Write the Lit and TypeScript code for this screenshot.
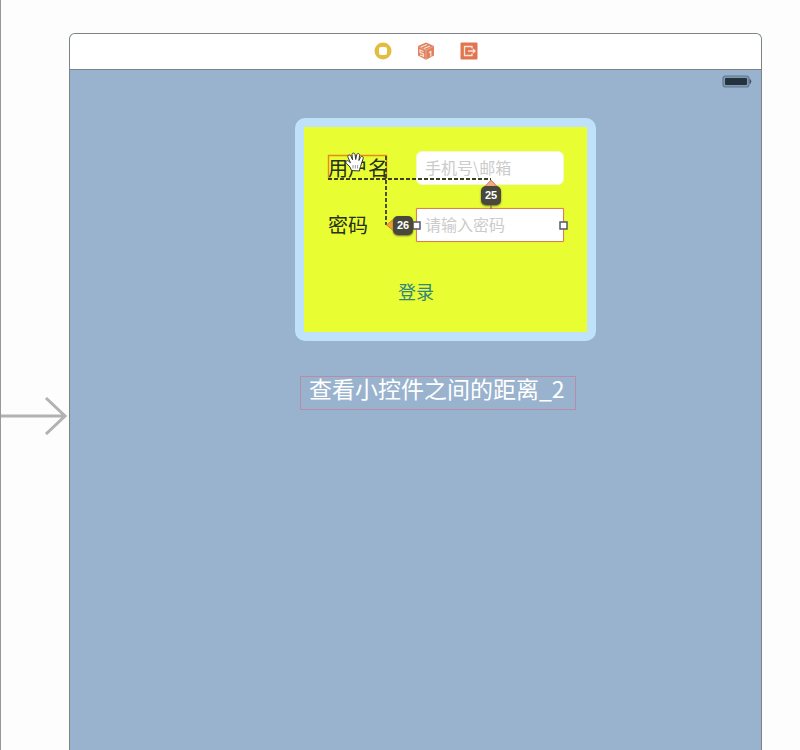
import { LitElement, html, css, svg } from "lit";
import { customElement } from "lit/decorators.js";

@customElement("scene-dock")
class SceneDock extends LitElement {
  static styles = css`
    :host { display: flex; justify-content: center; align-items: center; gap: 25px; height: 35px;
      box-sizing: border-box; padding: 0 0 1px 21px; background: #fff; }
    svg { display: block; width: 18px; height: 18px; }
  `;
  render() {
    return html`
      <svg viewBox="0 0 18 18" role="img" aria-label="View Controller">
        <circle cx="9" cy="9" r="8.5" fill="#e2bd3e"/>
        <rect x="5" y="5" width="8" height="8" rx="2" fill="#fff"/>
      </svg>
      <svg viewBox="0 0 18 18" role="img" aria-label="First Responder">
        <path d="M9 .5 17 4v9.5L9 17.8 1 13.5V4Z" fill="#e0805c"/>
        <path d="M1.4 4.4 9 8l7.600-3.600M9 8v9.400" fill="none" stroke="#eeb49c" stroke-width=".8"/>
        <path d="M4 5l6-2.500M7 6.500l6-2.500M6.500 9.500 3 8v2.300l3.500 1.700v2.300L3 12.700M12 10.500l1.800-1v5" fill="none" stroke="#fbe3d9" stroke-width="1.200"/>
      </svg>
      <svg viewBox="0 0 18 18" role="img" aria-label="Exit">
        <rect x=".5" y=".5" width="17" height="17" rx="1" fill="#e0764f"/>
        <path d="M12 6.500V4.500H4.500v9H12v-2M8 9h7M13 7l2 2-2 2" fill="none" stroke="#fbe3d9" stroke-width="1.300"/>
      </svg>
    `;
  }
}

@customElement("login-card")
class LoginCard extends LitElement {
  static styles = css`
    :host { display: block; }
    .card { position: relative; box-sizing: border-box; border: 9px solid #bfe1f9; border-radius: 10px;
      background: #e9fd33; padding: 24px 23px 29px 24px; }
    .fields { display: grid; grid-template-columns: 72px 1fr; column-gap: 16px; row-gap: 23px; align-items: center; }
    label { font-size: 20px; line-height: 24px; color: #27301c; white-space: nowrap; }
    input { box-sizing: border-box; width: 100%; height: 34px; margin: 0; padding: 0 8px 2px; border: 1px solid #f3f7cc;
      border-radius: 6px; background: #fff; font: inherit; font-size: 16px; color: #333; outline: none; }
    input::placeholder { color: #cbcbcb; opacity: 1; }
    .selected { border-color: #dd8242; border-radius: 1px; box-shadow: 0 0 1px #dd8242; }
    .login { display: block; margin: 37px 0 0 70px; padding: 0; border: 0; background: none; font: inherit;
      font-size: 18px; line-height: 24px; color: #32867f; cursor: pointer; }
    .guides { position: absolute; left: 0; top: 0; width: 284px; height: 206px; pointer-events: none; }
    .badge { position: absolute; box-sizing: border-box; width: 20px; height: 19px; border-radius: 5px;
      background: #49493b; color: #fff; font: bold 11px/19px "Liberation Sans", Arial, sans-serif;
      text-align: center; box-shadow: 0 1px 2px #6b6d3b; }
    .vertical { left: 177px; top: 59px; }
    .horizontal { left: 89px; top: 89px; }
  `;
  render() {
    return html`
      <form class="card" @submit=${(e: Event) => e.preventDefault()}>
        <div class="fields">
          <label for="user">用户名</label>
          <input id="user" type="text" placeholder="手机号\\邮箱">
          <label for="pass">密码</label>
          <input id="pass" class="selected" type="password" placeholder="请输入密码">
        </div>
        <button class="login" type="submit">登录</button>
        <svg class="guides" viewBox="0 0 284 206" aria-hidden="true">
          <path d="M24.5 52V28.5H82.5V52" fill="none" stroke="#e58a1c" stroke-width="1.400"/>
          <path d="M24 52H187M82 29V98" fill="none" stroke="#3c401f" stroke-width="1.800" stroke-dasharray="4 2"/>
          <path d="M187 78v4" stroke="#55553c"/>
          <path d="M180.500 60 187 53l6.500 7Z" fill="#efac83" stroke="#d9774e"/>
          <path d="M91 91 82.500 98l8.500 7Z" fill="#f0a12b" stroke="#dd7c2f"/>
          ${[112.5, 259.5].map((x) => svg`<rect x=${x - 3.5} y="95" width="7" height="7" fill="#fff" stroke="#55556b" stroke-width="1.500"/>`)}
          <path d="M47.500 43.500 46 40l-3.500-3.500c-1.700-2 .6-3.700 2.300-2.200l1.700 1.500-2.500-5.500c-.9-2.200 1.800-3.300 2.800-1.200l1.800 3.700-.6-4.800c-.2-2.400 2.800-2.600 3.100-.3l.6 4.800 1-4.600c.5-2.200 3.200-1.600 2.900.6l-.7 5 1.500-3c1.100-2 3.400-.9 2.700 1.200L57 38c-.4 1.800-1.300 3-1.500 6Z" fill="#fff" stroke="#34362b" stroke-width="1"/>
          <path d="M49 38v3.500m2.300-3.500v3.500m2.300-3.500v3.500" stroke="#999" stroke-width="1"/>
        </svg>
        <span class="badge vertical">25</span>
        <span class="badge horizontal">26</span>
      </form>
    `;
  }
}

@customElement("app-root")
class AppRoot extends LitElement {
  static styles = css`
    :host { display: block; font-family: "Noto Sans CJK SC", sans-serif; }
    .page { box-sizing: border-box; display: flex; min-height: 100vh; padding: 33px 38px 0 0;
      border-left: 1px solid #999; background: #fdfdfd; }
    .entry { flex: none; width: 68px; padding-top: 362px; }
    .entry svg { display: block; width: 68px; height: 40px; }
    .scene { box-sizing: border-box; flex: 1; display: flex; flex-direction: column; min-width: 0;
      border: 1px solid #7d8286; border-bottom: 0; border-radius: 6px 6px 0 0; overflow: hidden; background: #99b2ce; }
    .status { display: flex; justify-content: flex-end; padding: 5px 9px 0 0; border-top: 1px solid #7d8286; }
    .status svg { display: block; width: 30px; height: 13px; }
    .stack { box-sizing: border-box; display: flex; justify-content: center; padding: 30px 0 0 60px; }
    .column { width: 301px; }
    .caption { box-sizing: border-box; width: 276px; height: 34px; margin: 35px 0 0 5px; padding: 0 8px;
      border: 1px solid #b58da8; color: #fff; font-size: 23px; line-height: 22px; font-weight: 400; white-space: nowrap; }
  `;
  render() {
    return html`
      <main class="page">
        <div class="entry">
          <svg viewBox="0 0 68 40" fill="none" stroke="#b3b1b1" stroke-width="3" aria-hidden="true">
            <path d="M0 21H65M45 3 64 21 45 39"/>
          </svg>
        </div>
        <section class="scene">
          <scene-dock></scene-dock>
          <div class="status">
            <svg viewBox="0 0 30 13" role="img" aria-label="Battery">
              <rect x="1" y="1" width="26" height="11" rx="2.500" fill="#7f99b0" stroke="#62798d" stroke-width="1.200"/>
              <rect x="3" y="3" width="22" height="7" rx="1" fill="#24323e"/>
              <path d="M28 4.500q2 2 0 4Z" fill="#40566a" stroke="#40566a"/>
            </svg>
          </div>
          <div class="stack">
            <div class="column">
              <login-card></login-card>
              <p class="caption">查看小控件之间的距离_2</p>
            </div>
          </div>
        </section>
      </main>
    `;
  }
}
